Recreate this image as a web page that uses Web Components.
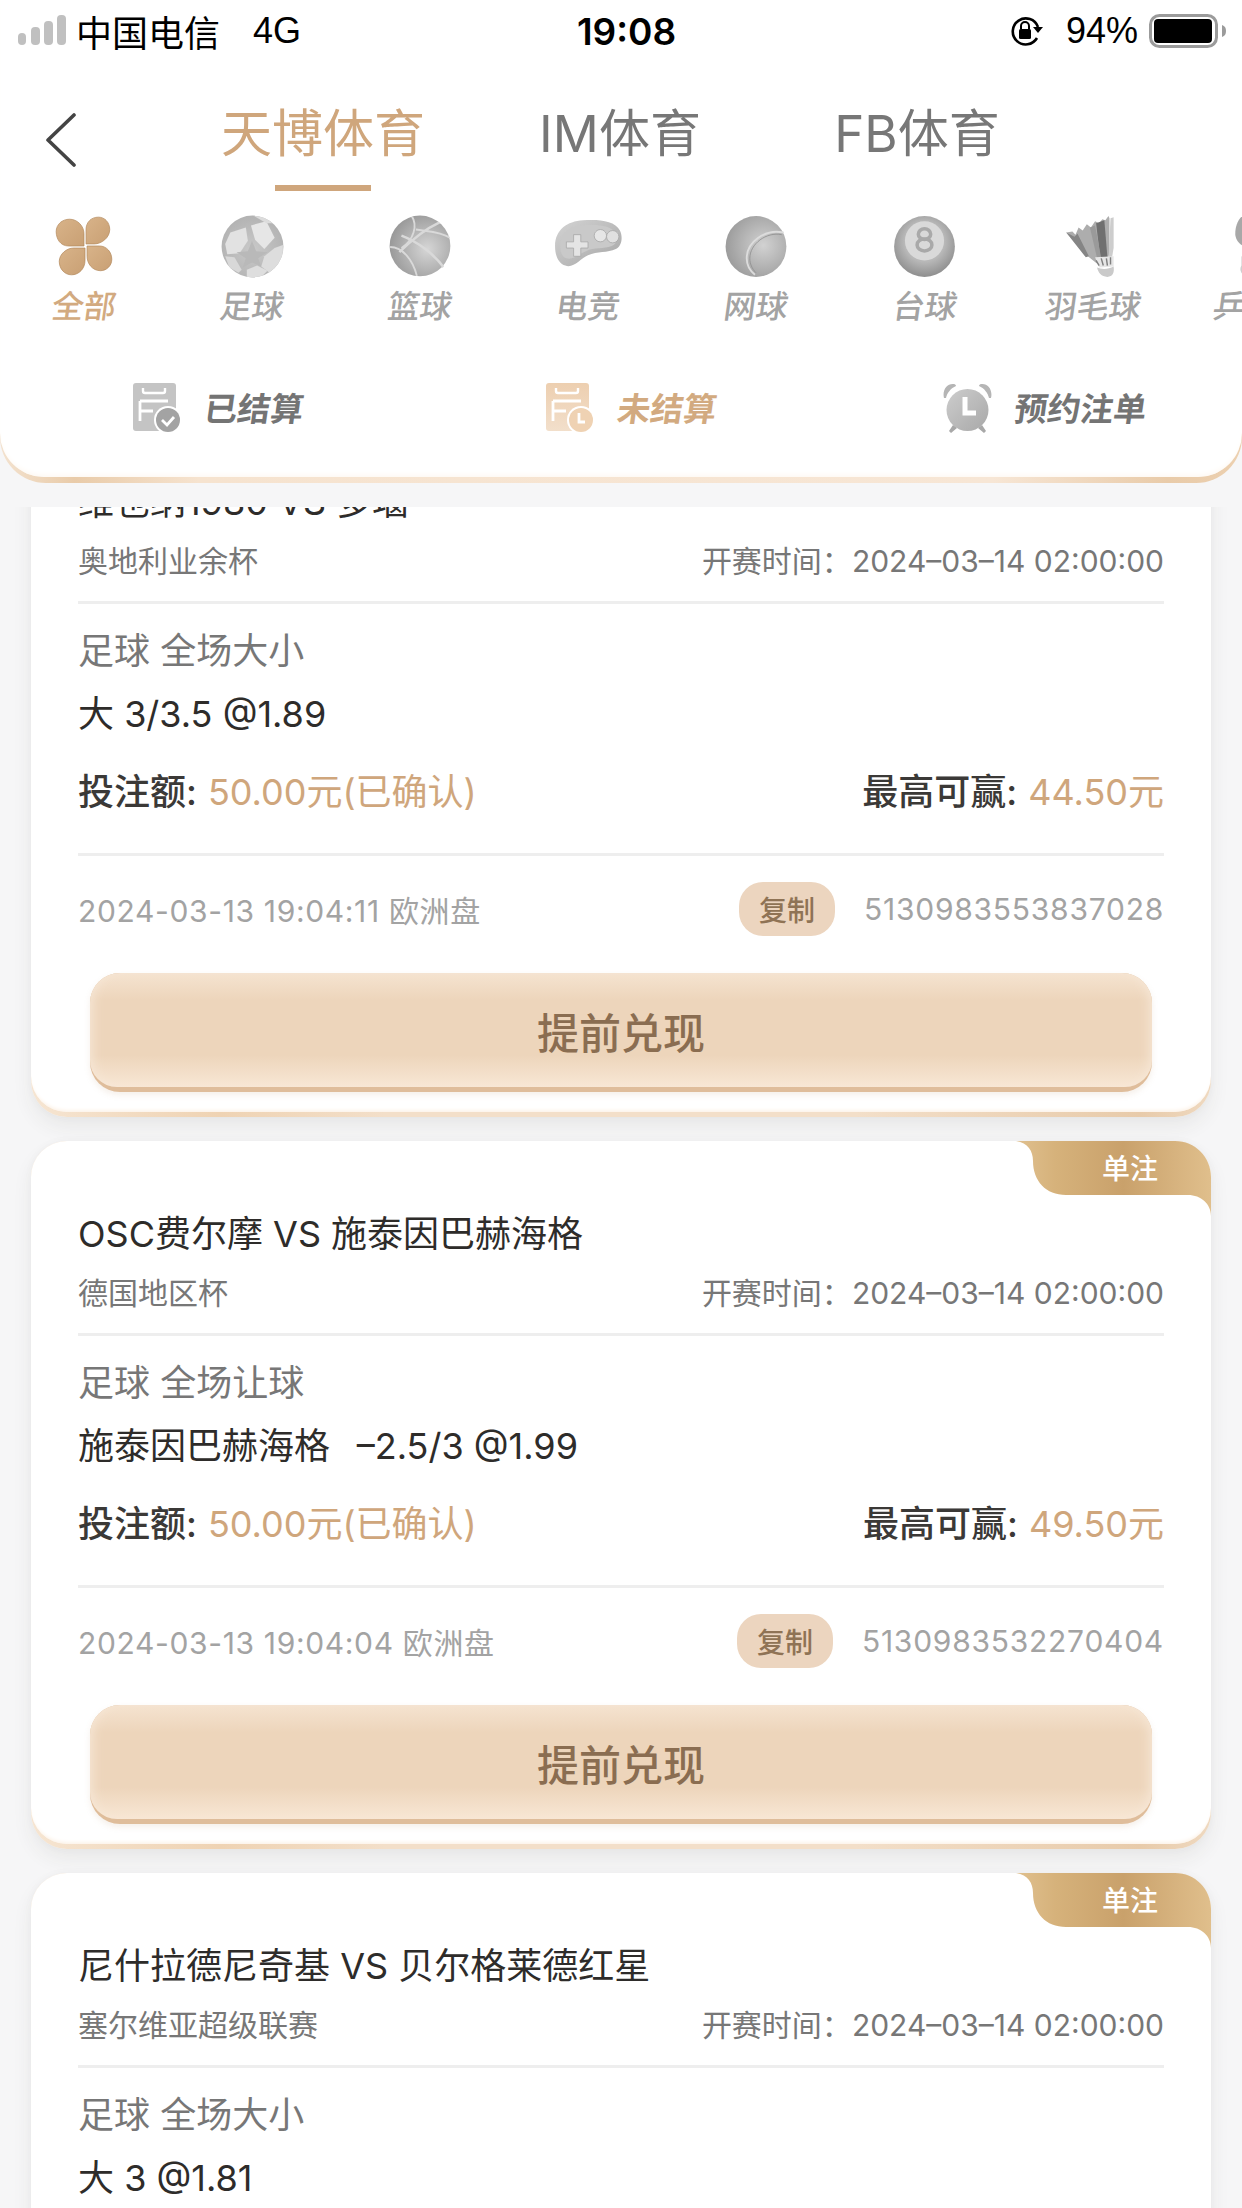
<!DOCTYPE html>
<html lang="zh-CN">
<head>
<meta charset="utf-8">
<title>天博体育</title>
<style>
  html, body {
    margin: 0;
    width: 1242px;
    height: 2208px;
    overflow: hidden;
    background: #f6f6f7;
    font-family: "Inter", "Noto Sans CJK SC", sans-serif;
  }
  body { display: flex; flex-direction: column; }
</style>
</head>
<body>
<top-panel>
  <status-bar></status-bar>
  <nav-tabs>
    <nav-tab active>天博体育</nav-tab>
    <nav-tab>IM体育</nav-tab>
    <nav-tab>FB体育</nav-tab>
  </nav-tabs>
  <sport-strip>
    <sport-item icon="all" active>全部</sport-item>
    <sport-item icon="soccer">足球</sport-item>
    <sport-item icon="basket">篮球</sport-item>
    <sport-item icon="esport">电竞</sport-item>
    <sport-item icon="tennis">网球</sport-item>
    <sport-item icon="pool">台球</sport-item>
    <sport-item icon="shuttle">羽毛球</sport-item>
    <sport-item icon="pingpong">乒乓球</sport-item>
  </sport-strip>
  <settle-tabs>
    <settle-tab icon="done">已结算</settle-tab>
    <settle-tab icon="open" active>未结算</settle-tab>
    <settle-tab icon="alarm">预约注单</settle-tab>
  </settle-tabs>
</top-panel>

<bet-list>
  <bet-card>
    <span slot="title">维也纳1980 VS 多瑙</span>
    <span slot="league">奥地利业余杯</span>
    <span slot="start">2024–03–14 02:00:00</span>
    <span slot="market">足球 全场大小</span>
    <span slot="pick">大 3/3.5 @1.89</span>
    <span slot="stake">50.00元(已确认)</span>
    <span slot="win">44.50元</span>
    <span slot="placed">2024-03-13 19:04:11 欧洲盘</span>
    <span slot="order">5130983553837028</span>
  </bet-card>
  <bet-card single>
    <span slot="title">OSC费尔摩 VS 施泰因巴赫海格</span>
    <span slot="league">德国地区杯</span>
    <span slot="start">2024–03–14 02:00:00</span>
    <span slot="market">足球 全场让球</span>
    <span slot="pick">施泰因巴赫海格&nbsp;&nbsp;&thinsp;–2.5/3 @1.99</span>
    <span slot="stake">50.00元(已确认)</span>
    <span slot="win">49.50元</span>
    <span slot="placed">2024-03-13 19:04:04 欧洲盘</span>
    <span slot="order">5130983532270404</span>
  </bet-card>
  <bet-card single partial>
    <span slot="title">尼什拉德尼奇基 VS 贝尔格莱德红星</span>
    <span slot="league">塞尔维亚超级联赛</span>
    <span slot="start">2024–03–14 02:00:00</span>
    <span slot="market">足球 全场大小</span>
    <span slot="pick">大 3 @1.81</span>
  </bet-card>
</bet-list>

<script>
  function define(name, css, html, setup) {
    customElements.define(name, class extends HTMLElement {
      constructor() {
        super();
        this.attachShadow({ mode: "open" });
        this.shadowRoot.innerHTML = `<style>${css}</style>${html}`;
      }
      connectedCallback() {
        if (setup) setup(this);
      }
    });
  }

  const ballDefs = (light, dark, cx, cy) => `
    <defs>
      <radialGradient id="b" cx="${cx}" cy="${cy}" r="0.62">
        <stop offset="0" stop-color="${light}"/>
        <stop offset="1" stop-color="${dark}"/>
      </radialGradient>
      <clipPath id="c"><circle cx="30.5" cy="30.5" r="30"/></clipPath>
      <filter id="s" x="-10%" y="-10%" width="120%" height="120%"><feGaussianBlur stdDeviation=".7"/></filter>
    </defs>`;

  const sportIcons = {
    all: `<svg width="61" height="61" viewBox="0 0 61 61">
      <defs><linearGradient id="p" x1="0" y1="0" x2="1" y2="1">
        <stop offset="0" stop-color="#d8b389"/><stop offset="1" stop-color="#c9a074"/>
      </linearGradient></defs>
      <g fill="url(#p)" stroke="#b48a5e" stroke-width=".7">
        <path d="M30 30H15C7 30 3 23 3 16 3 9 9 4 16 4 24 4 30 11 30 18z"/>
        <path d="M32 28V14C32 7 37 2 44 2 50 2 55 7 55 14 55 22 47 28 40 28z"/>
        <path d="M31 32V44C31 52 25 58 18 58 11 58 6 52 6 45 6 38 13 32 20 32z"/>
        <path d="M33 30H45C52 30 57 36 57 43 57 49 52 54 46 54 38 54 33 47 33 40z"/>
      </g></svg>`,
    soccer: `<svg width="61" height="61" viewBox="0 0 61 61">${ballDefs("#c9c9c9", "#b0b0b0", ".5", ".55")}
      <circle cx="30.5" cy="30.5" r="30" fill="url(#b)"/>
      <g clip-path="url(#c)" filter="url(#s)">
        <path d="M9 17 24 12l2 13-8 12-12 1-2-10z" fill="#e2e2e2"/>
        <path d="M29 10 44 6l8 16-10 11-9-9z" fill="#e6e6e6"/>
        <path d="M52 32 60 29v16L47 56l-8-6 3-10z" fill="#dddddd"/>
        <path d="M25 53l10-4 10 5-7 7H25z" fill="#dedede"/>
        <path d="M4 40l9 1 7 12-3 3-9-5z" fill="#d8d8d8"/>
        <path d="M32 1l11-1 9 8-8 0z" fill="#dcdcdc"/>
      </g>
      <path d="M30 25 34 35 45 36 36 42 39 50 30 46 21 51 24 42 15 36 26 35z" fill="#b9b9b9"/></svg>`,
    basket: `<svg width="61" height="61" viewBox="0 0 61 61">${ballDefs("#d6d6d6", "#999", ".62", ".55")}
      <circle cx="30" cy="30" r="29.5" fill="url(#b)"/>
      <g clip-path="url(#c)" fill="none" stroke="#d9d9d9" stroke-width="1.8">
        <path d="M22 1C28 10 24 24 12 32"/>
        <path d="M49 7C34 14 18 28 10 36" stroke-width="2.4"/>
        <path d="M1 31c12 0 22 12 26 28"/>
        <path d="M12 20c16 6 32 18 42 32" stroke-width="2.4"/>
        <path d="M26 14c12 2 24 2 33 8"/>
      </g></svg>`,
    esport: `<svg width="66" height="61" viewBox="0 0 66 61">
      <defs><linearGradient id="g" x1="0" y1="0" x2="1" y2="1">
        <stop offset="0" stop-color="#d4d4d4"/><stop offset="1" stop-color="#a6a6a6"/>
      </linearGradient></defs>
      <path d="M1 30C1 14 13 6 28 5c15-1 31 0 36 10 3 6 2 15-4 18-8 4-18 2-27 6-7 3-14 13-22 10C4 47 1 39 1 30z" fill="url(#g)"/>
      <path d="M6 29C6 17 16 10 29 10c13-1 27 0 31 8 2 5 1 10-4 12-8 3-17 1-25 5-7 3-13 9-19 7C8 41 6 36 6 29z" fill="#c9c9c9"/>
      <path d="M19 19h7v7h7v6h-7v8h-7v-8h-7v-6h7z" fill="#e4e4e4" stroke="#a8a8a8" stroke-width=".8"/>
      <circle cx="45" cy="20" r="6" fill="#e6e6e6" stroke="#a8a8a8" stroke-width=".8"/>
      <circle cx="57" cy="21" r="6" fill="#e0e0e0" stroke="#a8a8a8" stroke-width=".8"/></svg>`,
    tennis: `<svg width="61" height="61" viewBox="0 0 61 61">${ballDefs("#d2d2d2", "#9c9c9c", ".62", ".48")}
      <circle cx="30" cy="30.5" r="29.5" fill="url(#b)"/>
      <path d="M57 17C39 13 21 26 21 42c0 6 3 12 8 16" fill="none" stroke="#dcdcdc" stroke-width="1.8"/>
      <path d="M55 19C40 16 24 28 24 42c0 5 2 10 6 14" fill="none" stroke="#8f8f8f" stroke-width=".8"/></svg>`,
    pool: `<svg width="61" height="61" viewBox="0 0 61 61">
      <defs><radialGradient id="b" cx=".5" cy=".42" r=".6">
        <stop offset=".55" stop-color="#b8b8b8"/><stop offset="1" stop-color="#8b8b8b"/>
      </radialGradient></defs>
      <circle cx="30.5" cy="30.5" r="29.5" fill="url(#b)"/>
      <circle cx="30.5" cy="25" r="19" fill="#d9d9d9"/>
      <g fill="none" stroke="#a9a9a9" stroke-width="3.4">
        <ellipse cx="30.5" cy="18.5" rx="6" ry="5.2"/><ellipse cx="30.5" cy="29" rx="7.2" ry="5.8"/>
      </g></svg>`,
    shuttle: `<svg width="54" height="61" viewBox="0 0 54 61">
      <path d="M1 17l6-1 3 3 3-7 4 3 4-6 4 3 4-6 4 2 3-4 3 1 3-4 1 2v32l-2 13H32L22 40z" fill="#adadad"/>
      <path d="M1 17l8 4 3-3 11 22-3 1z" fill="#858585"/>
      <path d="M30 8l8-3 3 36h-7z" fill="#707070"/>
      <path d="M24 12l5-2 6 32h-4z" fill="#9a9a9a"/>
      <path d="M44 3l3-1v30l-2 12h-3z" fill="#cdcdcd"/>
      <path d="M29 41l18-1 0 10-14 1z" fill="#e6e6e6"/>
      <path d="M30 44l3 5M35 42l2 7M40 42l1 7M44 41l0 7" stroke="#808080" stroke-width="1.4"/>
      <path d="M31 51c4 2 11 2 16-1 1 6-1 10-6 10-6 0-9-4-10-9z" fill="#cacaca"/></svg>`,
    pingpong: `<svg width="61" height="61" viewBox="0 0 61 61">
      <path d="M14 0C8 4 6 12 6 18s5 12 12 14h20V0z" fill="#a8a8a8"/>
      <path d="M12 40l10 2v16h-8c-3-2-4-6-2-9z" fill="#cfcfcf"/></svg>`
  };

  const settleIcons = {
    done: `<svg width="49" height="50" viewBox="0 0 49 50">
      <rect x="0" y="0" width="43" height="48" rx="3" fill="#c4c4c4"/>
      <path d="M10 5v3c0 1 1 2 2 2h18c1 0 2-1 2-2V5" fill="none" stroke="#fff" stroke-width="2.4"/>
      <path d="M7 18h28M7 18v20M7 28h13" fill="none" stroke="#fff" stroke-width="2.8"/>
      <circle cx="35" cy="37" r="14" fill="#fff"/><circle cx="35" cy="37" r="12" fill="#a3a3a3"/>
      <path d="M29 37l5 5 7-8" fill="none" stroke="#fff" stroke-width="2.8"/></svg>`,
    open: `<svg width="49" height="50" viewBox="0 0 49 50">
      <defs><linearGradient id="o" x1="0" y1="0" x2="0" y2="1">
        <stop offset="0" stop-color="#edcfb0"/><stop offset="1" stop-color="#f2dfcb"/>
      </linearGradient></defs>
      <rect x="0" y="0" width="43" height="48" rx="3" fill="url(#o)"/>
      <path d="M10 5v3c0 1 1 2 2 2h18c1 0 2-1 2-2V5" fill="none" stroke="#fff" stroke-width="2.4"/>
      <path d="M7 18h28M7 18v20M7 28h13" fill="none" stroke="#fff" stroke-width="2.8"/>
      <circle cx="35" cy="37" r="14" fill="#fff"/><circle cx="35" cy="37" r="12" fill="#efd2b3"/>
      <path d="M33 30v9h6" fill="none" stroke="#fff" stroke-width="2.8"/></svg>`,
    alarm: `<svg width="49" height="50" viewBox="0 0 49 50">
      <defs><linearGradient id="a" x1="0" y1="0" x2="1" y2="1">
        <stop offset="0" stop-color="#cdcdcd"/><stop offset="1" stop-color="#a8a8a8"/>
      </linearGradient></defs>
      <path d="M1 15C-1 7 4 0 11 1c1 0 2 1 2 2C8 5 4 10 3 15z" fill="#b5b5b5"/>
      <path d="M48 15c2-8-3-15-10-14-1 0-2 1-2 2 5 2 9 7 10 12z" fill="#b5b5b5"/>
      <circle cx="24.500" cy="27" r="21" fill="url(#a)"/>
      <path d="M10 42l-4 6 2 2 6-5zM39 42l4 6-2 2-6-5z" fill="#a8a8a8"/>
      <path d="M22 14v16h11" fill="none" stroke="#fff" stroke-width="5"/></svg>`
  };

  define("status-bar", `
    :host {
      display: grid;
      grid-template-columns: 1fr auto 1fr;
      align-items: center;
      height: 62px;
      padding: 0 15px 0 18px;
      color: #000;
      font-size: 36px;
      font-family: "Liberation Sans", "Noto Sans CJK SC", sans-serif;
    }
    .left, .right { display: flex; align-items: center; }
    .right { justify-content: flex-end; }
    .carrier { margin-left: 10px; }
    .net { margin-left: 33px; }
    .time { font-family: "Inter", sans-serif; font-weight: 600; font-size: 37px; margin-left: 8px; }
    .pct { margin: 0 11px 0 22px; }
    svg { display: block; }
  `, `
    <div class="left">
      <svg width="48" height="32" viewBox="0 0 48 32" fill="#c0c0c0">
        <rect x="0" y="18" width="8" height="12" rx="4"/><rect x="13" y="12" width="9" height="18" rx="4"/>
        <rect x="26" y="6" width="9" height="24" rx="4"/><rect x="39" y="0" width="9" height="30" rx="4"/>
      </svg>
      <span class="carrier">中国电信</span><span class="net">4G</span>
    </div>
    <div class="time">19:08</div>
    <div class="right">
      <svg width="34" height="30" viewBox="0 0 34 30">
        <path d="M27 22A13 13 0 1 1 28 11" fill="none" stroke="#000" stroke-width="2.6"/>
        <path d="M23 11h10l-5 6z" fill="#000"/>
        <rect x="9" y="13" width="12" height="10" rx="1.500" fill="#000"/>
        <path d="M11 13V10a4 4 0 0 1 8 0v3" fill="none" stroke="#000" stroke-width="2"/>
      </svg>
      <span class="pct">94%</span>
      <svg width="78" height="34" viewBox="0 0 78 34">
        <rect x="1.500" y="1.500" width="66" height="31" rx="9" fill="#fff" stroke="#9b9b9b" stroke-width="3"/>
        <rect x="5" y="5" width="58" height="24" rx="4" fill="#000"/>
        <path d="M73 11c3 1 4 3 4 6s-1 5-4 6z" fill="#9b9b9b"/>
      </svg>
    </div>
  `);

  define("top-panel", `
    :host {
      display: block;
      flex: none;
      height: 483px;
      border-radius: 0 0 46px 46px;
      background: linear-gradient(90deg, #f3e2cf 0, #e9cba9 6%, #f6e3cf 16%, #f7e6d5 80%, #e9cba9 94%, #ecd0b0 100%);
    }
    .inner {
      height: 477px;
      background: #fff;
      border-radius: 0 0 44px 44px;
      overflow: hidden;
      box-shadow: inset 0 -5px 6px -4px #fdf6ee;
    }
  `, `<div class="inner"><slot></slot></div>`);

  define("nav-tabs", `
    :host {
      display: flex;
      align-items: flex-start;
      padding-top: 36px;
    }
    .back { flex: none; margin: 15px 0 0 45px; width: 129.5px; }
    svg { display: block; }
  `, `
    <div class="back">
      <svg width="32" height="54" viewBox="0 0 32 54">
        <path d="M29 2 3 27l26 25" fill="none" stroke="#444" stroke-width="3.6" stroke-linecap="round" stroke-linejoin="round"/>
      </svg>
    </div>
    <slot></slot>
  `);

  define("nav-tab", `
    :host {
      display: flex;
      flex-direction: column;
      align-items: center;
      width: 297px;
      color: #777;
      font-size: 51px;
      line-height: 72px;
    }
    :host([active]) { color: #cfa67c; }
    i { display: block; width: 96px; height: 6px; margin-top: 15px; }
    :host([active]) i { background: #cfa67c; }
  `, `<span><slot></slot></span><i></i>`);

  define("sport-strip", `
    :host {
      display: flex;
      padding-top: 25px;
      overflow: hidden;
    }
    ::slotted(*) { flex: none; }
  `, `<slot></slot>`);

  define("sport-item", `
    :host {
      display: flex;
      flex-direction: column;
      align-items: center;
      width: 168.100px;
      color: #a3a3a3;
    }
    :host([active]) { color: #d2aa80; }
    .icon { height: 61px; display: flex; justify-content: center; align-items: center; }
    .label {
      margin-top: 10px;
      font-size: 32px;
      line-height: 40px;
      font-weight: 500;
      transform: skewX(-8deg);
      white-space: nowrap;
    }
    svg { display: block; transform: scale(1.03); }
  `, `<div class="icon"></div><div class="label"><slot></slot></div>`, el => {
    el.shadowRoot.querySelector(".icon").innerHTML = sportIcons[el.getAttribute("icon")];
  });

  define("settle-tabs", `
    :host {
      display: grid;
      grid-template-columns: repeat(3, 413.500px);
      margin-top: 56px;
      padding-left: 10px;
    }
  `, `<slot></slot>`);

  define("settle-tab", `
    :host {
      display: flex;
      align-items: center;
      justify-content: center;
      gap: 20px;
      height: 50px;
      color: #747474;
      font-size: 33px;
      font-weight: 700;
    }
    :host([active]) { color: #d2aa80; }
    span { display: block; transform: translateX(3px) skewX(-8deg); margin-top: -3px; }
    svg { display: block; }
  `, `<div class="icon"></div><span><slot></slot></span>`, el => {
    el.shadowRoot.querySelector(".icon").innerHTML = settleIcons[el.getAttribute("icon")];
  });

  define("bet-list", `
    :host {
      display: block;
      flex: 1;
      min-height: 0;
      margin-top: 24px;
      overflow: hidden;
    }
    .track {
      display: flex;
      flex-direction: column;
      gap: 24px;
      margin-top: -98px;
      padding: 0 31px;
    }
  `, `<div class="track"><slot></slot></div>`);

  define("bet-card", `
    :host {
      display: block;
      position: relative;
      height: 708px;
      border-radius: 36px;
      background: linear-gradient(90deg, #f6e5d2 0, #efd3b3 16%, #f3dfc9 30%, #f3dfc9 70%, #e8cbaa 94%, #efd9c0 100%);
      box-shadow: 0 10px 20px rgba(60, 50, 40, .07), 0 0 8px rgba(60, 50, 40, .03);
      color: #2e2c2a;
    }
    .inner {
      height: 703px;
      box-sizing: border-box;
      padding: 68px 47px 0 47px;
      background: #fff;
      border-radius: 36px;
      box-shadow: inset 0 -4px 4px -3px #fbeee0;
    }
    .title { font-size: 36px; line-height: 50px; white-space: nowrap; }
    .row { display: flex; justify-content: space-between; align-items: center; }
    .league { margin-top: 13px; height: 40px; box-sizing: border-box; padding-bottom: 3px; font-size: 30px; color: #777; }
    hr { margin: 0; border: 0; height: 3px; background: #eee; }
    .h1 { margin-top: 21px; }
    .market { margin-top: 22px; font-size: 36px; line-height: 50px; color: #777; white-space: pre; }
    .pick { margin-top: 13px; font-size: 36px; line-height: 50px; }
    .money { margin-top: 25px; height: 50px; font-size: 36px; font-weight: 500; color: #3b3937; }
    .money b { font-weight: 400; color: #cfa67c; margin-left: 11px; }
    .h2 { margin-top: 39px; }
    .meta { margin-top: 26px; height: 54px; font-size: 30px; color: #a3a3a3; letter-spacing: .65px; }
    .order { display: flex; align-items: center; gap: 29px; }
    .copy {
      display: flex;
      align-items: center;
      justify-content: center;
      width: 96px;
      height: 54px;
      border-radius: 24px;
      background: #ecd5bf;
      color: #8f7355;
      font-size: 28px;
      font-weight: 500;
      letter-spacing: 0;
    }
    .num { letter-spacing: .75px; }
    .cash {
      margin: 37px 12px 0;
      height: 119px;
      box-sizing: border-box;
      padding-bottom: 5px;
      border-radius: 30px;
      background: #dfbd9b;
      box-shadow: 0 3px 6px rgba(190, 150, 110, .15);
    }
    .cash div {
      display: flex;
      align-items: center;
      justify-content: center;
      height: 100%;
      box-sizing: border-box;
      border-radius: 30px 30px 27px 27px;
      background: linear-gradient(#f5e3d0 0, #edd5bb 24%, #edd5bb 72%, #f8e7d5 100%);
      box-shadow: inset 10px 0 12px -8px #f7e8d8, inset -10px 0 12px -8px #f7e8d8;
      color: #8a6d51;
      font-size: 42px;
      font-weight: 500;
    }
    :host([partial]) .foot { display: none; }
    .tag { display: none; position: absolute; top: 0; right: 0; width: 195px; height: 75px; }
    :host([single]) .tag { display: block; }
    .tag svg { position: absolute; inset: 0; }
    .tag span {
      position: absolute;
      top: 8px;
      left: 86px;
      color: #fff;
      font-size: 28px;
      line-height: 40px;
      font-weight: 500;
    }
  `, `
    <div class="inner">
      <div class="title"><slot name="title"></slot></div>
      <div class="row league"><span><slot name="league"></slot></span><span>开赛时间&#xFF1A;<slot name="start"></slot></span></div>
      <hr class="h1">
      <div class="market"><slot name="market"></slot></div>
      <div class="pick"><slot name="pick"></slot></div>
      <div class="foot">
        <div class="row money">
          <span>投注额:<b><slot name="stake"></slot></b></span>
          <span>最高可赢:<b><slot name="win"></slot></b></span>
        </div>
        <hr class="h2">
        <div class="row meta">
          <span><slot name="placed"></slot></span>
          <span class="order"><span class="copy">复制</span><span class="num"><slot name="order"></slot></span></span>
        </div>
        <div class="cash"><div>提前兑现</div></div>
      </div>
    </div>
    <div class="tag">
      <svg width="195" height="75" viewBox="0 0 195 75">
        <defs><linearGradient id="t" x1="0" y1="0" x2="1" y2="0">
          <stop offset="0" stop-color="#e0c08f"/><stop offset=".2" stop-color="#d6b27b"/>
          <stop offset=".55" stop-color="#c9a16b"/><stop offset="1" stop-color="#e0bf8c"/>
        </linearGradient></defs>
        <path d="M0 0C12 2 17 10 17 20 17 40 30 54 50 54H172C185 54 195 63 195 75V36C195 16 179 0 159 0z" fill="url(#t)"/>
      </svg>
      <span>单注</span>
    </div>
  `);
</script>
</body>
</html>
